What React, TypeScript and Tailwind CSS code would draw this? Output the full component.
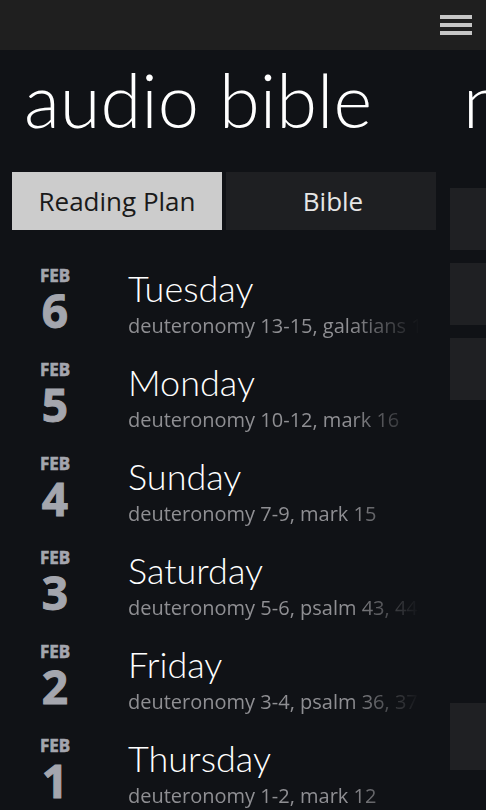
const plan = [
  { day: 6, name: 'Tuesday', reading: 'deuteronomy 13-15, galatians 1-2' },
  { day: 5, name: 'Monday', reading: 'deuteronomy 10-12, mark 16' },
  { day: 4, name: 'Sunday', reading: 'deuteronomy 7-9, mark 15' },
  { day: 3, name: 'Saturday', reading: 'deuteronomy 5-6, psalm 43, 44' },
  { day: 2, name: 'Friday', reading: 'deuteronomy 3-4, psalm 36, 37' },
  { day: 1, name: 'Thursday', reading: 'deuteronomy 1-2, mark 12' },
];

function PlanRow({ day, name, reading }: { day: number; name: string; reading: string }) {
  return (
    <div className="flex h-[94px] shrink-0">
      {/* date block */}
      <div className="w-[86px] flex flex-col items-center pt-[11px] text-[#a4a6ae] font-['Noto_Sans',sans-serif] font-bold [-webkit-text-stroke:1px_#a4a6ae]">
        <div className="text-[17px] leading-[17px] [-webkit-text-stroke:0.6px_#a4a6ae]">FEB</div>
        <div className="text-[46px] leading-[46px] mt-[3px]">{day}</div>
      </div>
      <div className="ml-[30px] flex-1 min-w-0 pt-[12px]">
        <div className="text-[36px] leading-[40px] font-light text-white font-['Lato',sans-serif]">{name}</div>
        <div className="mt-[6px] text-[20px] leading-[24px] text-[#8f8f93] whitespace-nowrap overflow-hidden w-[292px] font-['Open_Sans',sans-serif] [mask-image:linear-gradient(to_right,#000_76%,transparent_100%)]">
          {reading}
        </div>
      </div>
    </div>
  );
}

export default function App() {
  return (
    <div className="w-[486px] h-[810px] overflow-hidden bg-[#101216] flex flex-col font-['Open_Sans',sans-serif]">
      {/* app bar */}
      <div className="h-[50px] shrink-0 bg-[#1f1f1f] flex items-center justify-end pr-[14px]">
        <div className="flex flex-col gap-[4px] w-[32px]">
          <span className="h-[4px] bg-[#c6c6c6]" />
          <span className="h-[4px] bg-[#c6c6c6]" />
          <span className="h-[4px] bg-[#c6c6c6]" />
        </div>
      </div>

      {/* pivot headers */}
      <div className="h-[122px] shrink-0 flex pt-[14px] whitespace-nowrap overflow-hidden font-['Lato',sans-serif] font-light text-white">
        <div className="pl-[24px] w-[463px] shrink-0 text-[74px] leading-[72px]">
          audio bible
        </div>
        <div className="text-[74px] leading-[72px]">notes</div>
      </div>

      <div className="flex flex-1 min-h-0">
        {/* reading plan pivot */}
        <div className="w-[438px] shrink-0 pl-[12px] flex flex-col">
          <div className="flex gap-[4px] h-[58px] shrink-0 text-[26px]">
            <div className="w-[210px] bg-[#cccccc] text-[#1a1a1a] flex items-center justify-center">
              Reading Plan
            </div>
            <div className="w-[210px] bg-[#1e1f22] text-[#e6e6e6] flex items-center justify-center pl-[4px]">
              Bible
            </div>
          </div>
          <div className="pt-[26px] flex flex-col">
            {plan.map((p) => (
              <PlanRow key={p.day} {...p} />
            ))}
          </div>
        </div>

        {/* next pivot peek */}
        <div className="ml-[12px] flex-1 flex flex-col gap-[13px] pt-[16px]">
          <div className="h-[62px] bg-[#1f2023]" />
          <div className="h-[62px] bg-[#1f2023]" />
          <div className="h-[62px] bg-[#1f2023]" />
          <div className="h-[67px] bg-[#1f2023] mt-[290px]" />
        </div>
      </div>
    </div>
  );
}
